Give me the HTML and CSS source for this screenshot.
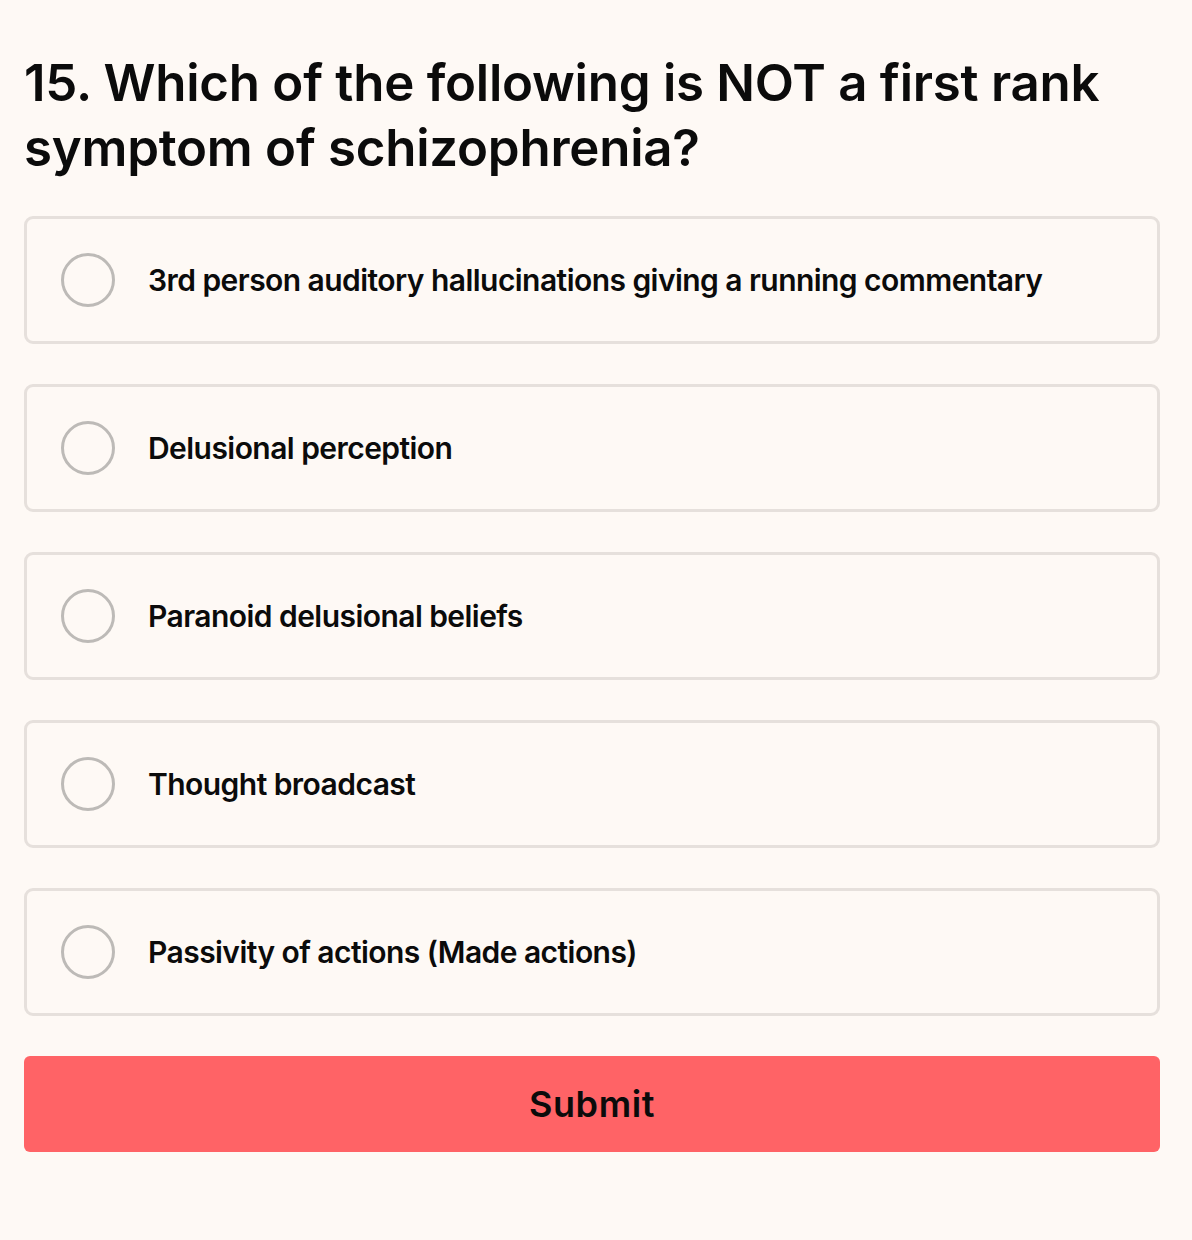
FILE: index.html
```html
<!DOCTYPE html>
<html>
<head>
<meta charset="utf-8">
<link rel="stylesheet" href="styles.css">
</head>
<body>
<main class="quiz">
  <h1 class="question">15. Which of the following is NOT a first rank symptom of schizophrenia?</h1>
  <div class="options">
    <label class="option"><span class="radio"></span><span class="label">3rd person auditory hallucinations giving a running commentary</span></label>
    <label class="option"><span class="radio"></span><span class="label">Delusional perception</span></label>
    <label class="option"><span class="radio"></span><span class="label">Paranoid delusional beliefs</span></label>
    <label class="option"><span class="radio"></span><span class="label">Thought broadcast</span></label>
    <label class="option"><span class="radio"></span><span class="label">Passivity of actions (Made actions)</span></label>
  </div>
  <button class="submit">Submit</button>
</main>
</body>
</html>
```
FILE: styles.css
```css
html, body {
  margin: 0;
  padding: 0;
  background: #fef9f5;
}
body {
  font-family: Inter, "Liberation Sans", sans-serif;
  color: #0b0b0b;
}
.quiz {
  padding: 50px 32px 0 24px;
  display: flex;
  flex-direction: column;
}
.question {
  margin: 0;
  font-size: 51px;
  line-height: 65px;
  font-weight: 600;
  letter-spacing: -0.25px;
}
.options {
  margin-top: 36px;
  display: flex;
  flex-direction: column;
  gap: 40px;
}
.option {
  height: 128px;
  box-sizing: border-box;
  border: 3px solid #e6e0dc;
  border-radius: 9px;
  display: flex;
  align-items: center;
  padding-left: 34px;
  gap: 33px;
}
.radio {
  width: 54px;
  height: 54px;
  box-sizing: border-box;
  border: 3px solid #bdbab7;
  border-radius: 50%;
  flex: none;
}
.label {
  font-size: 30px;
  font-weight: 600;
  letter-spacing: -0.55px;
}
.submit {
  margin-top: 40px;
  height: 96px;
  border: none;
  border-radius: 6px;
  background: #ff6366;
  color: #0b0b0b;
  font-family: Inter, "Liberation Sans", sans-serif;
  font-size: 36px;
  font-weight: 600;
  letter-spacing: 0.6px;
}
```
